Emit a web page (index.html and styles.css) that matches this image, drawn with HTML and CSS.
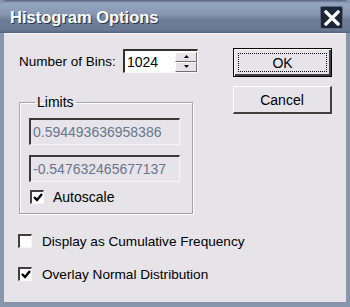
FILE: index.html
```html
<!DOCTYPE html>
<html>
<head>
<meta charset="utf-8">
<link rel="stylesheet" href="styles.css">
</head>
<body>
<div class="window">
  <div class="titlebar">
    <span class="title">Histogram Options</span>
    <span class="close"><svg width="16" height="16" viewBox="0 0 16 16"><path d="M2 2 L14 14 M14 2 L2 14" stroke="#fff" stroke-width="3.2" stroke-linecap="square"/></svg></span>
  </div>
  <div class="body">
    <div class="left">
      <div class="bins">
        <span class="label">Number of Bins:</span>
        <div class="spin">
          <span class="spin-val">1024</span>
          <div class="spin-btns">
            <div class="sbtn"><svg width="5" height="3" viewBox="0 0 5 3"><path d="M0 3 L5 3 L2.5 0 Z" fill="#000"/></svg></div>
            <div class="sbtn"><svg width="5" height="3" viewBox="0 0 5 3"><path d="M0 0 L5 0 L2.5 3 Z" fill="#000"/></svg></div>
          </div>
        </div>
      </div>
      <fieldset class="group">
        <legend>Limits</legend>
        <div class="field">0.594493636958386</div>
        <div class="field">-0.547632465677137</div>
        <label class="check inner"><span class="box"><svg width="10" height="9" viewBox="0 0 10 9"><path d="M1 4 L4 7 L9 1" stroke="#000" stroke-width="2.4" fill="none"/></svg></span>Autoscale</label>
      </fieldset>
      <label class="check first"><span class="box"></span>Display as Cumulative Frequency</label>
      <label class="check second"><span class="box"><svg width="10" height="9" viewBox="0 0 10 9"><path d="M1 4 L4 7 L9 1" stroke="#000" stroke-width="2.4" fill="none"/></svg></span>Overlay Normal Distribution</label>
    </div>
    <div class="right">
      <div class="btn default"><span class="focus">OK</span></div>
      <div class="btn">Cancel</div>
    </div>
  </div>
</div>
</body>
</html>
```
FILE: styles.css
```css
html, body { margin: 0; padding: 0; }
body { width: 350px; height: 307px; overflow: hidden; font-family: "Liberation Sans", Arial, sans-serif; font-size: 13px; color: #000; }
.window { width: 350px; height: 307px; box-sizing: border-box; background: #8795ad; padding: 0 4px 5px 4px; display: flex; flex-direction: column; }
.titlebar { height: 33px; margin: 0 -4px; display: flex; align-items: center; justify-content: space-between; padding: 0 7px 0 10px;
  background: linear-gradient(#56627a 0px, #95a6c0 3px, #8797b2 14px, #6d7d98 20px, #6a7a94 30px, #55627a 33px); border-radius: 6px 6px 0 0; flex-shrink: 0; }
.title { color: #fff; font-family: "Liberation Sans", Arial, sans-serif; font-weight: bold; font-size: 16.5px; text-shadow: 1px 1px 0 #2a3448; position: relative; top: 1px; }
.close { width: 23px; height: 23px; box-sizing: border-box; background: #1c2636; border: 1px solid #5a6880; border-radius: 2px; display: flex; align-items: center; justify-content: center; margin-top: 2px; }
.body { flex: 1; background: #e6e4e8; border-top: 1px solid #f4f3f6; display: flex; padding: 14px 0 0 15px; }
.left { width: 214px; display: flex; flex-direction: column; }
.bins { display: flex; align-items: center; height: 24px; margin-top: 1px; }
.label { width: 104px; font-size: 13.5px; }
.spin { width: 75px; height: 24px; box-sizing: border-box; background: #fff; border-style: solid; border-width: 2px 1px 1px 2px; border-color: #303030 #f8f8f8 #f8f8f8 #303030; display: flex; align-items: center; justify-content: space-between; padding-left: 2px; font-size: 14px; }
.spin-btns { display: flex; flex-direction: column; width: 22px; height: 20px; }
.sbtn { flex: 1; background: #e6e4e8; border-style: solid; border-width: 1px; border-color: #fff #707070 #707070 #fff; display: flex; align-items: center; justify-content: center; }
.group { margin: 22px 0 0 0; padding: 8px 0 0 9px; width: 174px; height: 119px; box-sizing: border-box; border: 1px solid #a4a2aa; box-shadow: 1px 1px 0 #fff, inset 1px 1px 0 #fff; min-width: 0; }
.group legend { padding: 0 2px; margin-left: 6px; font-size: 14px; line-height: 15px; }
.field { width: 151px; height: 27px; box-sizing: border-box; border-style: solid; border-width: 2px 1px 1px 2px; border-color: #3a3a3a #f4f4f4 #f4f4f4 #3a3a3a; color: #667690; font-size: 14px; line-height: 24px; padding-left: 2px; margin-bottom: 10px; }
.check { display: flex; align-items: center; font-size: 14px; height: 16px; white-space: nowrap; }
.box { width: 14px; height: 14px; flex-shrink: 0; box-sizing: border-box; background: #fff; border-style: solid; border-width: 2px 1px 1px 2px; border-color: #404040 #f6f6f6 #f6f6f6 #404040; margin-right: 10px; display: flex; align-items: center; justify-content: center; }
.check.inner { margin-top: -3px; margin-left: 1px; }
.check.inner .box { margin-right: 9px; }
.check.first { margin-top: 19px; margin-left: -1px; font-size: 13.6px; }
.check.second { margin-top: 17px; margin-left: -1px; font-size: 13.6px; }
.right { display: flex; flex-direction: column; margin-left: 0; }
.btn { width: 99px; height: 28px; box-sizing: border-box; background: #e6e4e8; border-style: solid; border-width: 1px 2px 2px 1px; border-color: #fff #404040 #404040 #fff; display: flex; align-items: center; justify-content: center; font-size: 14px; margin-bottom: 9px; }
.btn.default { height: 29px; border: 1px solid #000; box-shadow: inset 1px 1px 0 #fff, inset -2px -2px 0 #404040; padding: 4px; }
.focus { flex: 1; align-self: stretch; border: 1px dotted #000; display: flex; align-items: center; justify-content: center; }
```
